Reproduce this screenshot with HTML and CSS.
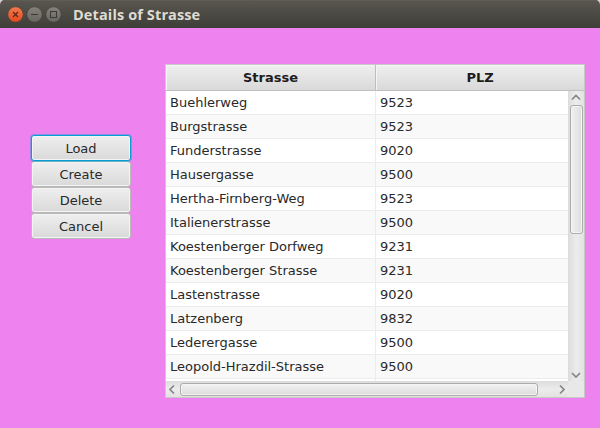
FILE: index.html
```
<!DOCTYPE html>
<html lang="de">
<head>
<meta charset="utf-8">
<title>Details of Strasse</title>
<link rel="stylesheet" href="styles.css">
</head>
<body>
<div class="window">
  <header class="titlebar">
    <svg class="controls" width="58" height="20" viewBox="0 0 58 20">
      <defs>
        <linearGradient id="close" x1="0" y1="0" x2="0" y2="1"><stop offset="0" stop-color="#f67a50"/><stop offset="1" stop-color="#de4a1c"/></linearGradient>
        <linearGradient id="grey" x1="0" y1="0" x2="0" y2="1"><stop offset="0" stop-color="#85827a"/><stop offset="1" stop-color="#686660"/></linearGradient>
      </defs>
      <circle cx="9.5" cy="10.5" r="7.7" fill="url(#close)" stroke="#45403a" stroke-width=".6"/>
      <circle cx="28.5" cy="10.5" r="7.7" fill="url(#grey)" stroke="#403e38" stroke-width=".6"/>
      <circle cx="47.5" cy="10.5" r="7.7" fill="url(#grey)" stroke="#403e38" stroke-width=".6"/>
      <path d="M7 8l5 5M12 8l-5 5" stroke="#58291b" stroke-width="1.2"/>
      <path d="M25 10.5h7" stroke="#3b3934"/>
      <rect x="44.5" y="7.5" width="6" height="6" fill="none" stroke="#3b3934"/>
    </svg>
    <h1 class="title">Details of Strasse</h1>
  </header>
  <main class="content">
    <nav class="actions">
      <button class="btn focused">Load</button>
      <button class="btn">Create</button>
      <button class="btn">Delete</button>
      <button class="btn">Cancel</button>
    </nav>
    <section class="table">
      <div class="head"><div class="th first">Strasse</div><div class="th">PLZ</div></div>
      <div class="rows">
        <div class="row"><span class="street">Buehlerweg</span><span class="plz">9523</span></div>
        <div class="row"><span class="street">Burgstrasse</span><span class="plz">9523</span></div>
        <div class="row"><span class="street">Funderstrasse</span><span class="plz">9020</span></div>
        <div class="row"><span class="street">Hausergasse</span><span class="plz">9500</span></div>
        <div class="row"><span class="street">Hertha-Firnberg-Weg</span><span class="plz">9523</span></div>
        <div class="row"><span class="street">Italienerstrasse</span><span class="plz">9500</span></div>
        <div class="row"><span class="street">Koestenberger Dorfweg</span><span class="plz">9231</span></div>
        <div class="row"><span class="street">Koestenberger Strasse</span><span class="plz">9231</span></div>
        <div class="row"><span class="street">Lastenstrasse</span><span class="plz">9020</span></div>
        <div class="row"><span class="street">Latzenberg</span><span class="plz">9832</span></div>
        <div class="row"><span class="street">Lederergasse</span><span class="plz">9500</span></div>
        <div class="row"><span class="street">Leopold-Hrazdil-Strasse</span><span class="plz">9500</span></div>
        <div class="row"><span class="street"></span><span class="plz"></span></div>
      </div>
      <div class="vbar">
        <svg width="16" height="14"><path d="M4 8.5l4-4 4 4" class="arrow"/></svg>
        <div class="vthumb"></div>
        <svg class="down" width="16" height="12"><path d="M4 4l4 4 4-4" class="arrow"/></svg>
      </div>
      <div class="hbar">
        <svg width="14" height="16"><path d="M8 4.5l-4 4 4 4" class="arrow"/></svg>
        <div class="hthumb"></div>
        <svg class="right" width="14" height="16"><path d="M6 4.5l4 4-4 4" class="arrow"/></svg>
      </div>
      <div class="corner"></div>
    </section>
  </main>
</div>
</body>
</html>
```
FILE: styles.css
```
* { box-sizing: border-box; }
body { margin: 0; background: #d4d2d0; font: 13px "DejaVu Sans", sans-serif; color: #292929; }
.window { width: 600px; height: 428px; display: flex; flex-direction: column; overflow: hidden; background: #ee82ee; border-radius: 5px 5px 0 0; }
.titlebar { height: 28px; flex: none; display: flex; align-items: center; padding: 0 6px; background: linear-gradient(#59574f, #3e3d38); box-shadow: inset 0 1px #5f5d55; }
.title { margin: 2px 0 0 9px; font: bold 14.5px/20px "Open Sans", sans-serif; letter-spacing: .12px; color: #dfdbd2; white-space: nowrap; }
.content { flex: 1; display: flex; align-items: flex-start; padding: 36px 0 0 31px; }
.actions { display: flex; flex-direction: column; width: 100px; margin: 71px 34px 0 0; }
.btn { height: 26px; padding: 0; border: 1px solid #b9b9b9; border-radius: 3px; background: linear-gradient(#efefef, #d9d9d9); box-shadow: inset 0 0 0 1px #f4f4f4; font: inherit; color: #292929; }
.focused { border-color: #039ed3; box-shadow: 0 0 0 1px #039ed366, inset 0 0 0 1px #f4f4f4; position: relative; }
.table { width: 420px; height: 334px; display: grid; grid-template: 26px 290px 16px / 402px 16px; border: 1px solid #c8c8c8; background: #fff; }
.head { grid-column: 1 / 3; display: flex; background: linear-gradient(#efefef, #d9d9d9); border-bottom: 1px solid #c0c0c0; box-shadow: inset 0 1px #f8f8f8; }
.th { flex: 1; text-align: center; font-weight: bold; line-height: 26px; color: #1c1c1c; box-shadow: inset 1px 1px #f5f5f5; }
.th.first { flex: 0 0 210px; border-right: 1px solid #bdbdbd; }
.rows { overflow: hidden; }
.row { display: flex; height: 24px; line-height: 23px; border-bottom: 1px solid #ececec; }
.row:nth-child(even) { background: #f9f9f9; }
.street { width: 210px; padding-left: 4px; border-right: 1px solid #ececec; white-space: nowrap; }
.plz { padding-left: 4px; }
.vbar { display: flex; flex-direction: column; background: linear-gradient(90deg, #dcdcdc, #ececec 50%, #e2e2e2); }
.hbar { display: flex; background: linear-gradient(#dcdcdc, #ececec 50%, #e2e2e2); }
.corner { background: #e8e8e8; }
.arrow { fill: none; stroke: #858585; stroke-width: 1.7; }
.vthumb { width: 13px; height: 129px; margin-left: 2px; border: 1px solid #acacac; border-radius: 3px; background: linear-gradient(90deg, #f2f2f2, #dcdcdc); box-shadow: inset 0 0 0 1px #f4f4f4; }
.hthumb { width: 358px; height: 13px; margin-top: 2px; border: 1px solid #acacac; border-radius: 3px; background: linear-gradient(#f2f2f2, #dcdcdc); box-shadow: inset 0 0 0 1px #f4f4f4; }
.down { margin-top: auto; }
.right { margin-left: auto; }
```
